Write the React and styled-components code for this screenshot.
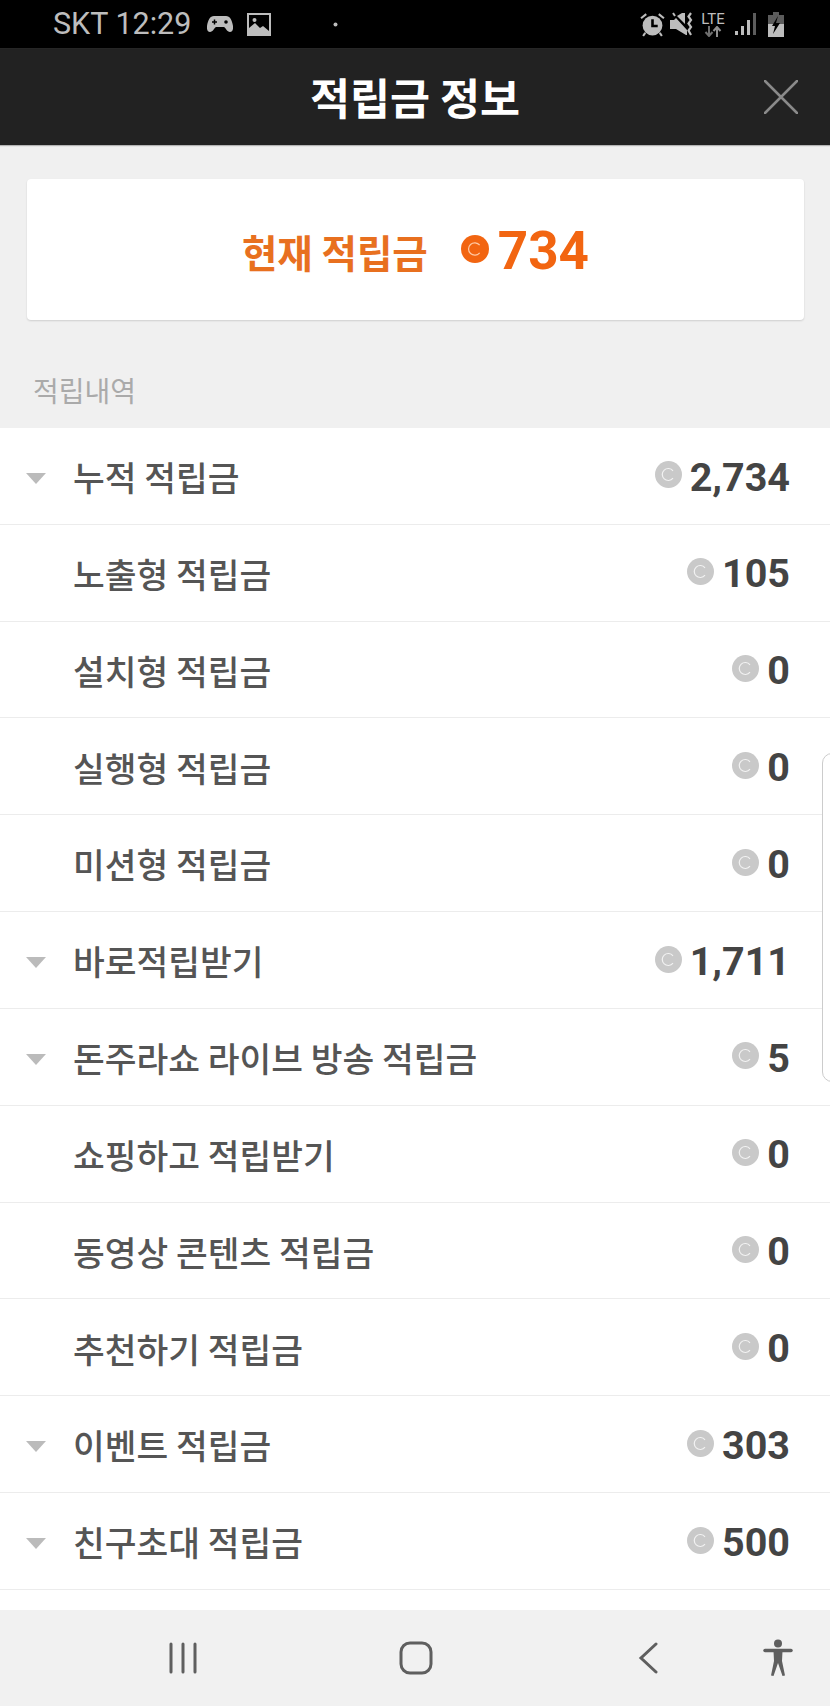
import styled, { createGlobalStyle } from 'styled-components'

const GlobalStyle = createGlobalStyle`
  html, body {
    margin: 0;
    padding: 0;
    background: #f0f0f0;
  }
  * {
    box-sizing: border-box;
  }
`

const Page = styled.div`
  position: relative;
  width: 830px;
  height: 1706px;
  overflow: hidden;
  display: flex;
  flex-direction: column;
  background: #f0f0f0;
  font-family: "Noto Sans CJK KR", Roboto, sans-serif;
`

const StatusBar = styled.div`
  height: 48px;
  flex: none;
  background: #000;
  display: flex;
  align-items: center;
  padding: 0 46px 0 53px;
  color: #bdbdbd;
`

const Carrier = styled.span`
  font-family: Roboto, sans-serif;
  font-size: 30.5px;
  line-height: 48px;
  white-space: nowrap;
`

const StatusIcon = styled.svg`
  flex: none;
  display: block;
  margin-left: ${props => props.$gap || 0}px;
`

const Spacer = styled.div`
  flex: 1;
`

const LteBox = styled.div`
  flex: none;
  width: 24px;
  margin-left: 7px;
  display: flex;
  flex-direction: column;
  align-items: center;
`

const LteText = styled.span`
  font-family: Roboto, sans-serif;
  font-size: 15px;
  line-height: 14px;
  color: #bdbdbd;
`

const Header = styled.header`
  height: 97px;
  flex: none;
  background: #222;
  border-top: 1px solid #262626;
  display: grid;
  grid-template-columns: 1fr auto 1fr;
  align-items: center;
  box-shadow: 0 1px 1px rgba(0, 0, 0, 0.25);
`

const Title = styled.h1`
  grid-column: 2;
  margin: 0;
  color: #fff;
  font-size: 43.5px;
  font-weight: 700;
  line-height: 1;
`

const CloseButton = styled.svg`
  justify-self: end;
  margin-right: 32px;
`

const Content = styled.main`
  flex: 1;
  display: flex;
  flex-direction: column;
`

const SummaryCard = styled.section`
  height: 141px;
  margin: 34px 26px 0 27px;
  background: #fff;
  border-radius: 4px;
  box-shadow: 0 1px 2px rgba(0, 0, 0, 0.14);
  display: flex;
  align-items: center;
  justify-content: center;
`

const SummaryLabel = styled.span`
  color: #e8701f;
  font-size: 38.5px;
  font-weight: 700;
  line-height: 1;
  margin: 3px 33px 0 0;
`

const SummaryValue = styled.span`
  color: #f26511;
  font-family: Roboto, sans-serif;
  font-size: 53px;
  font-weight: 700;
  line-height: 1;
  margin: 4px 0 0 9px;
`

const SectionLabel = styled.div`
  height: 108px;
  padding: 50px 0 0 33px;
  color: #aaa;
  font-size: 28px;
  line-height: 40px;
`

const List = styled.div`
  display: grid;
  grid-auto-rows: 96.83px;
  background: #fff;
  padding-bottom: 20px;
  flex: 1;
  align-content: start;
`

const Row = styled.div`
  display: flex;
  align-items: center;
  position: relative;
  padding: 0 40px 0 73px;
  background: #fff;
  border-bottom: 1.5px solid #ececec;
`

const Caret = styled.span`
  position: absolute;
  left: 26px;
  top: 45px;
  width: 0;
  height: 0;
  border-left: 10px solid transparent;
  border-right: 10px solid transparent;
  border-top: 11px solid #bbb;
`

const RowLabel = styled.span`
  flex: 1;
  color: #555;
  font-size: 34.5px;
  font-weight: 500;
  line-height: 1;
  margin-top: 1px;
`

const RowValue = styled.span`
  color: #444;
  font-family: Roboto, sans-serif;
  font-size: 39.5px;
  font-weight: 700;
  line-height: 1;
  margin: 3px 0 0 8px;
`

const CoinMark = styled.svg`
  flex: none;
  display: block;
  margin-top: -2px;
`

const SideHandle = styled.div`
  position: absolute;
  right: -12px;
  top: 753px;
  width: 20px;
  height: 329px;
  border: 1.5px solid #ccc;
  border-radius: 10px;
  background: #fff;
`

const NavBar = styled.nav`
  height: 97px;
  flex: none;
  background: #f1f1f1;
  display: flex;
  align-items: center;
  padding-left: 168px;
`

const NavIcon = styled.svg`
  flex: none;
  display: block;
  margin-left: ${props => props.$gap || 0}px;
`

const Coin = ({ size, fill, mark }) => (
  <CoinMark width={size} height={size} viewBox="0 0 27 27">
    <circle cx="13.5" cy="13.5" r="13.5" fill={fill} />
    <path d="M18 9.8a6 6 0 1 0 0 7.4" fill="none" stroke={mark} strokeWidth="1.2" />
  </CoinMark>
)

const rows = [
  { label: '누적 적립금', value: '2,734', caret: true },
  { label: '노출형 적립금', value: '105' },
  { label: '설치형 적립금', value: '0' },
  { label: '실행형 적립금', value: '0' },
  { label: '미션형 적립금', value: '0' },
  { label: '바로적립받기', value: '1,711', caret: true },
  { label: '돈주라쇼 라이브 방송 적립금', value: '5', caret: true },
  { label: '쇼핑하고 적립받기', value: '0' },
  { label: '동영상 콘텐츠 적립금', value: '0' },
  { label: '추천하기 적립금', value: '0' },
  { label: '이벤트 적립금', value: '303', caret: true },
  { label: '친구초대 적립금', value: '500', caret: true }
]

const App = () => {
  return (
    <Page>
      <GlobalStyle />
      <StatusBar>
        <Carrier>SKT 12:29</Carrier>
        <StatusIcon $gap={16} width="26" height="18" viewBox="0 0 26 18">
          <path d="M7 1h12c4 0 6 4 7 10 .5 4-1 6-3 6-3 0-4-4-6-5H9c-2 1-3 5-6 5-2 0-3.500-2-3-6C1 5 3 1 7 1z" fill="#bdbdbd" />
          <path d="M5 7h5M7.500 4.500v5" stroke="#000" strokeWidth="1.500" />
          <circle cx="19" cy="7" r="1.800" fill="#000" />
        </StatusIcon>
        <StatusIcon $gap={14} width="24" height="23" viewBox="0 0 24 23">
          <path fillRule="evenodd" d="M0 0h24v23H0zM2 2v13l6-5 5 5 3-2 6 5V2z" fill="#bdbdbd" />
          <circle cx="7.500" cy="7" r="2" fill="#bdbdbd" />
        </StatusIcon>
        <StatusIcon $gap={62} width="5" height="5" viewBox="0 0 5 5">
          <circle cx="2.500" cy="2.500" r="2" fill="#bdbdbd" />
        </StatusIcon>
        <Spacer />
        <StatusIcon width="25" height="25" viewBox="0 0 24 24">
          <circle cx="12" cy="13" r="9.500" fill="#bdbdbd" />
          <path d="M12 7v6.500h5" fill="none" stroke="#000" strokeWidth="2.500" />
          <path d="M1 6l5-4M23 6l-5-4M5 20l-2 3M19 20l2 3" stroke="#bdbdbd" strokeWidth="2" />
        </StatusIcon>
        <StatusIcon $gap={5} width="24" height="24" viewBox="0 0 24 24">
          <path d="M0 8h4l2-2 11 12v5h-1L6 17H0z" fill="#bdbdbd" />
          <path d="M7 4l5-3h3v11z" fill="#bdbdbd" />
          <path d="M3 1l2 3" stroke="#bdbdbd" strokeWidth="2" />
          <path d="M21 1l-2.500 3.500L21 8l-2.500 3.500L21 15l-2.500 3.500L21 23" fill="none" stroke="#bdbdbd" strokeWidth="2.200" />
        </StatusIcon>
        <LteBox>
          <LteText>LTE</LteText>
          <svg width="20" height="11" viewBox="0 0 20 11">
            <path d="M6 0v9M2.500 6L6 10l3.500-4" fill="none" stroke="#6f6f6f" strokeWidth="2" />
            <path d="M14 11V2M10.500 5L14 1l3.500 4" fill="none" stroke="#8f8f8f" strokeWidth="2" />
          </svg>
        </LteBox>
        <StatusIcon $gap={10} width="22" height="24" viewBox="0 0 22 24">
          <rect x="0" y="19" width="3" height="4" fill="#bdbdbd" />
          <rect x="6" y="14" width="3" height="9" fill="#bdbdbd" />
          <rect x="12" y="8" width="3" height="15" fill="#bdbdbd" />
          <rect x="18" y="1" width="3" height="22" fill="#5c5c5c" />
        </StatusIcon>
        <StatusIcon $gap={11} width="16" height="25" viewBox="0 0 16 25">
          <path d="M5 0h6v3h5v9H0V3h5z" fill="#5c5c5c" />
          <path d="M0 12h16v13H0z" fill="#bdbdbd" />
          <path d="M10 4L4 14h3l-2 8 7-11H8z" fill="#000" />
        </StatusIcon>
      </StatusBar>

      <Header>
        <Title>적립금 정보</Title>
        <CloseButton width="34" height="34" viewBox="0 0 34 34">
          <path d="M1 1l32 32M33 1L1 33" stroke="#8a8a8a" strokeWidth="2.500" strokeLinecap="round" />
        </CloseButton>
      </Header>

      <Content>
        <SummaryCard>
          <SummaryLabel>현재 적립금</SummaryLabel>
          <Coin size={28} fill="#f26511" mark="#ffc9a3" />
          <SummaryValue>734</SummaryValue>
        </SummaryCard>
        <SectionLabel>적립내역</SectionLabel>
        <List>
          {rows.map(row => (
            <Row key={row.label}>
              {row.caret && <Caret />}
              <RowLabel>{row.label}</RowLabel>
              <Coin size={27} fill="#c9c9c9" mark="#f2f2f2" />
              <RowValue>{row.value}</RowValue>
            </Row>
          ))}
        </List>
      </Content>

      <NavBar>
        <NavIcon width="30" height="32" viewBox="0 0 30 32">
          <path d="M3 2v28M15 2v28M27 2v28" stroke="#5f5f5f" strokeWidth="3" strokeLinecap="round" />
        </NavIcon>
        <NavIcon $gap={201} width="34" height="34" viewBox="0 0 34 34">
          <rect x="2" y="2" width="30" height="30" rx="9" fill="none" stroke="#5f5f5f" strokeWidth="3" />
        </NavIcon>
        <NavIcon $gap={205} width="20" height="32" viewBox="0 0 20 32">
          <path d="M18 2L3 16l15 14" fill="none" stroke="#5f5f5f" strokeWidth="3" strokeLinecap="round" />
        </NavIcon>
        <NavIcon $gap={105} width="30" height="38" viewBox="0 0 30 38">
          <circle cx="15" cy="4.500" r="4" fill="#5f5f5f" />
          <path d="M2 11.500h26" stroke="#5f5f5f" strokeWidth="3.500" strokeLinecap="round" />
          <path d="M10.500 12h9l-.5 10 3 14.500-2.500.5L15 24l-4.500 13-2.500-.5L11 22z" fill="#5f5f5f" />
        </NavIcon>
      </NavBar>

      <SideHandle />
    </Page>
  )
}

export default App
